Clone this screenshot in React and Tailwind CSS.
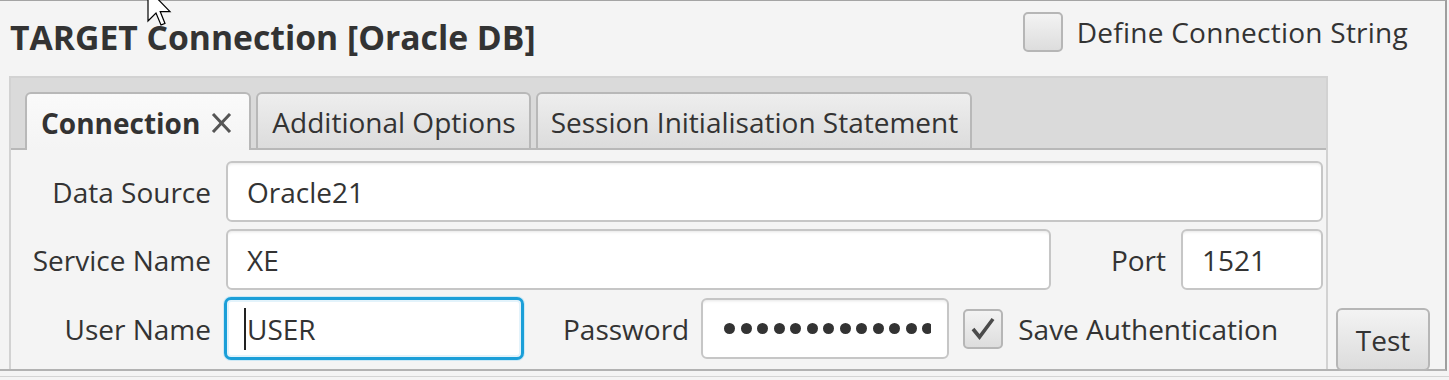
import React from "react";

const Field = ({ className = "", children }) => (
  <div
    className={`h-[61px] bg-white border-2 border-[#c6c6c6] rounded-[6px] shadow-[inset_0_3px_3px_-2px_rgba(0,0,0,0.10)] flex items-center pl-[19px] text-[28px] text-[#333] overflow-hidden ${className}`}
  >
    {children}
  </div>
);

const CheckBox = ({ checked }) => (
  <div className="w-[40px] h-[40px] shrink-0 rounded-[5px] border-2 border-[#b6b6b6] bg-gradient-to-b from-[#f3f3f3] to-[#dddddd] flex items-center justify-center">
    {checked && (
      <svg width="30" height="30" viewBox="0 0 30 30">
        <path d="M5 15 L11.5 23 L25 5" fill="none" stroke="#4a4a4a" strokeWidth="3.6" strokeLinejoin="miter" />
      </svg>
    )}
  </div>
);

const Label = ({ children, className = "" }) => (
  <div className={`text-[28px] text-[#333] leading-none whitespace-nowrap ${className}`}>{children}</div>
);

const App = () => {
  return (
    <div className="w-[1449px] h-[380px] bg-[#f4f4f4] relative overflow-hidden font-['Open_Sans',sans-serif] text-[#333]">
      <div className="w-[1447px] h-[371px] border-t border-t-[#a4a4a4] border-r-2 border-r-[#9e9e9e] border-b-2 border-b-[#b2b2b2] flex flex-col">
        <div className="h-[75px] flex justify-between items-start pl-[10px] pr-[37px]">
          <h1 className="mt-[14px] text-[33.7px] leading-[45px] font-bold whitespace-nowrap">TARGET Connection [Oracle DB]</h1>
          <div className="mt-[11px] flex items-center gap-[14px]">
            <CheckBox />
            <Label className="text-[28.5px] tracking-[0.25px]">Define Connection String</Label>
          </div>
        </div>

        <div className="flex h-[293px]">
          <div className="ml-[9px] w-[1319px] border-2 border-b-0 border-[#d2d2d2] flex flex-col">
            <div className="h-[72px] shrink-0 bg-[#dadada] border-b-2 border-[#b8b8b8] flex items-end px-[14px] gap-[5px]">
              <div className="relative z-10 -mb-[2px] h-[58px] rounded-t-[6px] border-2 border-b-0 border-[#b8b8b8] bg-gradient-to-b from-[#fafafa] to-[#f4f4f4] flex items-center pl-[14px] pr-[17px] gap-[11px] pt-[2px]">
                <span className="text-[28px] font-bold leading-none">Connection</span>
                <svg width="21" height="20" viewBox="0 0 21 20">
                  <path d="M2 1 L19 19 M19 1 L2 19" stroke="#555" strokeWidth="3" />
                </svg>
              </div>
              <div className="h-[56px] rounded-t-[6px] border-2 border-b-0 border-[#b8b8b8] bg-gradient-to-b from-[#eeeeee] to-[#dcdcdc] flex items-center pl-[14px] pr-[13px] pt-[2px]">
                <span className="text-[28px] leading-none">Additional Options</span>
              </div>
              <div className="h-[56px] rounded-t-[6px] border-2 border-b-0 border-[#b8b8b8] bg-gradient-to-b from-[#eeeeee] to-[#dcdcdc] flex items-center pl-[13px] pr-[12px] pt-[2px]">
                <span className="text-[28px] leading-none">Session Initialisation Statement</span>
              </div>
            </div>

            <div className="flex-1 bg-[#f4f4f4] pt-[11px] pr-[3px] flex flex-col gap-[7px]">
              <div className="flex items-center gap-[15px]">
                <Label className="w-[200px] text-right">Data Source</Label>
                <Field className="flex-1">Oracle21</Field>
              </div>
              <div className="flex items-center">
                <Label className="w-[200px] text-right mr-[15px]">Service Name</Label>
                <Field className="flex-1">XE</Field>
                <Label className="ml-[60px] mr-[15px]">Port</Label>
                <Field className="w-[142px]">1521</Field>
              </div>
              <div className="flex items-center">
                <Label className="w-[200px] text-right mr-[13px]">User Name</Label>
                <div className="h-[63px] w-[300px] bg-white border-[3px] border-[#1b9fd8] rounded-[7px] shadow-[0_0_0_1px_#cde9f6,inset_0_0_0_2px_#e3f3fb] flex items-center pl-[17px] text-[28px]">
                  <span className="w-[2px] h-[42px] bg-[#222] mr-[1px]" />
                  <span>USER</span>
                </div>
                <Label className="ml-[39px] mr-[12px]">Password</Label>
                <div className="h-[61px] w-[248px] bg-white border-2 border-[#c6c6c6] rounded-[6px] shadow-[inset_0_3px_3px_-2px_rgba(0,0,0,0.10)] flex items-center pl-[21px]">
                  <div className="w-[207px] overflow-hidden flex gap-[5.5px]">
                    {Array.from({ length: 13 }).map((_, i) => (
                      <span key={i} className="w-[11px] h-[11px] shrink-0 rounded-full bg-[#333]" />
                    ))}
                  </div>
                </div>
                <div className="ml-[14px] flex items-center gap-[15px]">
                  <CheckBox checked />
                  <Label>Save Authentication</Label>
                </div>
              </div>
            </div>
          </div>

          <div className="flex-1 flex items-end pl-[8px]">
            <button className="relative z-10 -mb-[2px] w-[94px] h-[63px] rounded-[6px] border-2 border-[#b6b6b6] bg-gradient-to-b from-[#f3f3f3] to-[#dcdcdc] text-[28px] text-[#333] flex items-center justify-center">
              Test
            </button>
          </div>
        </div>
      </div>
      <div className="h-[6px] border-b border-[#d4d4d4]" />

      <svg className="absolute left-[147px] top-[-12px]" width="26" height="40" viewBox="0 0 13 20">
        <path d="M0.5 0.5 L0.5 16.5 L4.5 12.5 L7 18.5 L9 17.7 L6.6 11.8 L11.5 11.8 Z" fill="#fff" stroke="#000" strokeWidth="0.6" strokeLinejoin="miter" />
      </svg>
    </div>
  );
};

export default App;
